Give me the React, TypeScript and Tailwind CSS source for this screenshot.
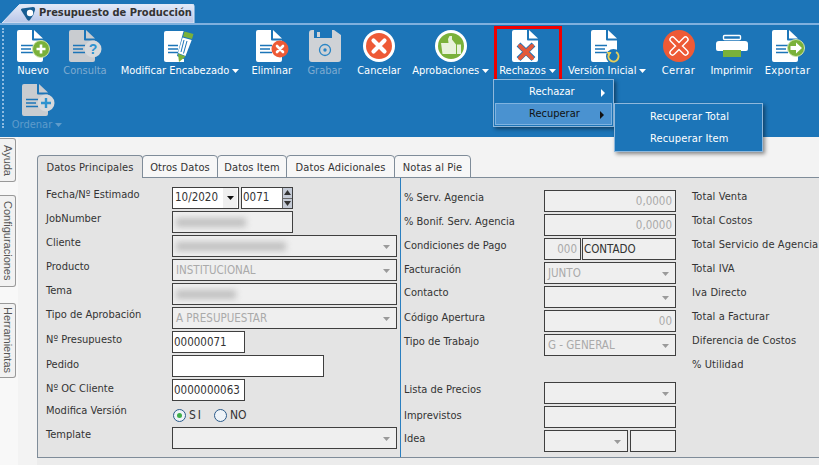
import React from "react";

const BLUE = "#1c75b8";

function Page({ fill = "#ffffff", lines = "#1c75b8" }: { fill?: string; lines?: string }) {
  return (
    <>
      <path d="M2 0H15V9.500a1 1 0 0 0 1 1H26V30a2 2 0 0 1-2 2H2a2 2 0 0 1-2-2V2a2 2 0 0 1 2-2z" fill={fill} />
      <path d="M17 0L26 8.600H17z" fill={fill} />
      <path d="M4 15.500H16M4 19H14M4 22.500H16" stroke={lines} strokeWidth="1.300" />
    </>
  );
}

function Icon({ name }: { name: string }) {
  const svg = (c: React.ReactNode) => (
    <svg viewBox="0 0 32 32" className="w-[32px] h-[32px] block overflow-visible">
      {c}
    </svg>
  );
  switch (name) {
    case "nuevo":
      return svg(
        <>
          <Page />
          <circle cx="24" cy="19" r="8.500" fill="#7ab13a" stroke="#cfe3b0" strokeWidth="1" />
          <path d="M24 14.500V23.500M19.500 19H28.500" stroke="#fff" strokeWidth="2.600" />
        </>
      );
    case "consulta":
      return svg(
        <>
          <Page fill="#c9ccd0" lines="#1c75b8" />
          <circle cx="24" cy="19" r="8.500" fill="#d6d9dc" />
          <text x="24" y="24" textAnchor="middle" fontSize="14" fontWeight="700" fill="#2f93cf" fontFamily="Liberation Sans, sans-serif">?</text>
        </>
      );
    case "modificar":
      return svg(
        <>
          <path d="M2 1H20V32H2a2 2 0 0 1-2-2V3a2 2 0 0 1 2-2z" fill="#fff" />
          <path d="M4 15.500H14M4 19H14M4 22.500H14" stroke="#1c75b8" strokeWidth="1.300" />
          <path d="M20 0H25L30 2L22 30L13 26L19 3z" fill={BLUE} />
          <path d="M20.500 1.500L29.500 4L28 9L19 6.500z" fill="#7ab13a" />
          <path d="M18.600 7.500L27.700 10L21.500 26L14 23z" fill="#fff" />
          <path d="M20 10L17 22M23 11L19.500 23.500" stroke={BLUE} strokeWidth="1" />
          <path d="M14 23.500L21.500 26.500L15 32z" fill="#7ab13a" />
        </>
      );
    case "eliminar":
      return svg(
        <>
          <Page />
          <circle cx="24" cy="19" r="8.500" fill="#ee5a36" />
          <path d="M21 16L27 22M27 16L21 22" stroke="#fff" strokeWidth="2.600" strokeLinecap="round" />
        </>
      );
    case "grabar":
      return svg(
        <>
          <path d="M3 0H5V8H23V0H25L32 5V29a3 3 0 0 1-3 3H3a3 3 0 0 1-3-3V3a3 3 0 0 1 3-3z" fill="#cfd2d6" />
          <rect x="8" y="2" width="3" height="5" fill="#cfd2d6" />
          <circle cx="16" cy="20" r="5.500" fill="none" stroke="#2a85c5" strokeWidth="1.300" />
          <circle cx="16" cy="20" r="1.700" fill="#2a85c5" />
        </>
      );
    case "cancelar":
      return svg(
        <>
          <circle cx="16" cy="16" r="16" fill="#fff" />
          <circle cx="16" cy="16" r="13" fill="#ee5a36" />
          <path d="M10.500 10.500L21.500 21.500M21.500 10.500L10.500 21.500" stroke="#fff" strokeWidth="4.200" strokeLinecap="round" />
        </>
      );
    case "aprobaciones":
      return svg(
        <>
          <circle cx="16" cy="16" r="16" fill="#fff" />
          <circle cx="16" cy="16" r="13" fill="#7ab13a" />
          <g transform="translate(32,0) scale(-1,1)">
            <path d="M6 14.500H10V24H6z" fill="#e8f2da" />
            <path d="M11 14.500L15 9.500V6h2.500L19 9L18.500 13H26L24.500 24H11z" fill="#e8f2da" />
          </g>
        </>
      );
    case "rechazos":
      return svg(
        <>
          <Page lines="#ffffff" />
          <path d="M6.500 14.500L21.500 29M21.500 14.500L6.500 29" stroke={BLUE} strokeWidth="5.400" strokeLinecap="butt" />
          <path d="M8 16L20 28M20 16L8 28" stroke="#e4593a" strokeWidth="4" strokeLinecap="round" />
        </>
      );
    case "version":
      return svg(
        <>
          <Page />
          <circle cx="22.500" cy="26.500" r="7.500" fill={BLUE} />
          <circle cx="22.500" cy="26.500" r="5" fill="none" stroke="#e8d05a" strokeWidth="2" strokeDasharray="25 7" transform="rotate(-60 22.500 26.500)" />
          <path d="M15.500 22H20.500L18 26z" fill="#e8d05a" />
        </>
      );
    case "cerrar":
      return svg(
        <>
          <circle cx="16" cy="16" r="16" fill="#ee5a36" />
          <path d="M9.500 9.500L22.500 22.500M22.500 9.500L9.500 22.500" stroke="#fff" strokeWidth="6.400" strokeLinecap="round" />
          <path d="M9.500 9.500L22.500 22.500M22.500 9.500L9.500 22.500" stroke="#ee5a36" strokeWidth="3.600" strokeLinecap="round" />
        </>
      );
    case "imprimir":
      return svg(
        <>
          <rect x="7.500" y="5.500" width="17" height="4" fill="none" stroke="#fff" strokeWidth="1.400" rx="1" />
          <path d="M3 11H29a3 3 0 0 1 3 3V19a2 2 0 0 1-2 2H2a2 2 0 0 1-2-2V14a3 3 0 0 1 3-3z" fill="#fff" />
          <rect x="7" y="20" width="18" height="7" fill="#7ab13a" />
        </>
      );
    case "exportar":
      return svg(
        <>
          <Page />
          <circle cx="24" cy="18" r="8.500" fill="#7ab13a" stroke="#cfe3b0" strokeWidth="1" />
          <path d="M18.500 16H24V12.500L30 18L24 23.500V20H18.500z" fill="#fff" />
        </>
      );
    default:
      return svg(
        <>
          <Page fill="#c9ccd0" />
          <circle cx="24" cy="19" r="8.500" fill="#d6d9dc" />
          <path d="M24 14V24M19 19H29" stroke="#2f93cf" strokeWidth="2.400" />
        </>
      );
  }
}

function Caret({ color }: { color: string }) {
  return (
    <svg viewBox="0 0 7 4" className="w-[7px] h-[4px] ml-[3px] inline-block">
      <path d="M0 0H7L3.500 4z" fill={color} />
    </svg>
  );
}

const buttons = [
  { w: "w-[44px]", n: "nuevo", t: "Nuevo" },
  { w: "w-[60px]", n: "consulta", t: "Consulta", d: 1 },
  { w: "w-[130px]", n: "modificar", t: "Modificar Encabezado", c: 1 },
  { w: "w-[53.500px]", n: "eliminar", t: "Eliminar" },
  { w: "w-[52px]", n: "grabar", t: "Grabar", d: 1 },
  { w: "w-[57px]", n: "cancelar", t: "Cancelar" },
  { w: "w-[86.500px]", n: "aprobaciones", t: "Aprobaciones", c: 1 },
];
const buttons2 = [
  { w: "w-[92.500px]", n: "version", t: "Versión Inicial", c: 1 },
  { w: "w-[50px]", n: "cerrar", t: "Cerrar", s: 1 },
  { w: "w-[56px]", n: "imprimir", t: "Imprimir" },
  { w: "w-[56px]", n: "exportar", t: "Exportar", s: 1 },
];

function ToolButton({ w, n, t, c, d, s }: { w: string; n: string; t: string; c?: number; d?: number; s?: number }) {
  return (
    <div className={`${w} flex flex-col items-center h-[47px]`}>
      <Icon name={n} />
      <div className={`mt-[2px] h-[14px] leading-[14px] whitespace-nowrap ${s ? "tracking-[0.4px]" : ""} ${d ? "text-[#7fabd0]" : "text-white"}`}>
        {t}
        {c ? <Caret color={d ? "#7fabd0" : "#ffffff"} /> : null}
      </div>
    </div>
  );
}

function Arrow({ color }: { color: string }) {
  return (
    <svg viewBox="0 0 4 8" className="w-[4px] h-[8px]">
      <path d="M0 0L4 4L0 8z" fill={color} />
    </svg>
  );
}

function SelCaret() {
  return (
    <svg viewBox="0 0 7 4" className="w-[7px] h-[4px] shrink-0">
      <path d="M0 0H7L3.500 4z" fill="#9a9a9a" />
    </svg>
  );
}

function Box({
  w,
  children,
  white,
  select,
  right,
}: {
  w: string;
  children?: React.ReactNode;
  white?: boolean;
  select?: boolean;
  right?: boolean;
}) {
  return (
    <div
      className={`${w} h-[22px] border border-[#3f3f3f] shrink-0 flex items-center overflow-hidden leading-none text-[11.500px] pt-[1px] ${
        white ? "bg-white text-[#333]" : "bg-[#efefef] text-[#aaa]"
      } ${right ? "justify-end pr-[3px]" : "pl-[1px]"} ${select ? "justify-between pr-[6px]" : ""}`}
    >
      <div className="min-w-0 flex-1 whitespace-nowrap overflow-visible">{children}</div>
      {select ? <SelCaret /> : null}
    </div>
  );
}

function Blur({ w }: { w: string }) {
  return <div className={`${w} h-[9px] ml-[2px] bg-[#c0c0c0] blur-[3px]`} />;
}

function Row({ label, off, lw, children }: { label: string; off?: string; lw: string; children?: React.ReactNode }) {
  return (
    <div className="flex h-[22px] items-start gap-0">
      <div className={`${lw} shrink-0 h-[14px] leading-[14px] whitespace-nowrap ${off ?? "mt-[1px]"}`}>{label}</div>
      <div className="flex gap-[2px]">{children}</div>
    </div>
  );
}

const LW = "w-[126px]";
const RW = "w-[140px]";

export default function App() {
  return (
    <div className="w-[819px] h-[465px] overflow-hidden flex flex-col bg-[#f3f3f3] text-[11px] text-[#333] font-['DejaVu_Sans',sans-serif] [font-stretch:condensed]">
      {/* Header */}
      <div className="bg-[#1c75b8] h-[137px] shrink-0 flex flex-col">
        <div className="h-[23px] relative shrink-0 pt-[4px] pl-[2px]">
          <svg viewBox="0 0 193 19" className="absolute left-[2px] top-[4px] w-[193px] h-[19px]">
            <defs>
              <linearGradient id="tabg" x1="0" x2="0" y1="0" y2="1">
                <stop offset="0" stopColor="#e3eaf8" />
                <stop offset="1" stopColor="#b8c6e8" />
              </linearGradient>
            </defs>
            <path d="M0 19L17 1Q18 0 20 0H190Q192 0 192 2V19z" fill="url(#tabg)" stroke="#dfe8f6" strokeWidth="1" />
          </svg>
          <div className="relative flex items-center h-[19px] pl-[18px] gap-[3px]">
            <svg viewBox="0 0 16 16" className="w-[16px] h-[16px] shrink-0">
              <path d="M1 4Q0.500 3 2 2.500L13 1Q15.500 1 15 4Q14 9 10 14Q8.500 15.500 7 13.500z" fill="#185d92" />
              <circle cx="10" cy="7" r="3.200" fill="#fff" />
            </svg>
            <span className="font-bold text-[11px] text-[#333] whitespace-nowrap">Presupuesto de Producción</span>
          </div>
        </div>
        <div className="h-[2px] bg-[#7fb0de] shrink-0" />
        <div className="relative flex-1 pt-[5px] pl-[11px]">
          <div className="absolute left-[2px] top-[3px] h-[100px] border-l-2 border-dotted border-[#8fbbe0]" />
          <div className="flex flex-wrap gap-y-[7px]">
            {buttons.map((b) => (
              <ToolButton key={b.n} {...b} />
            ))}
            <div className="relative w-[67px]">
              <ToolButton w="w-[67px]" n="rechazos" t="Rechazos" c={1} />
              <div className="absolute left-0 top-[-4px] w-[68px] h-[60px] border-[3px] border-[#f00000]" />
              <div className="absolute left-[-1px] top-[49px] w-[121px] h-[48px] border border-[#8fb8dc] bg-[#1c75b8] shadow-[2px_2px_4px_rgba(0,0,0,0.45)] z-10 p-[1px] text-white flex flex-col">
                <div className="h-[22px] flex items-center justify-between pl-[34px] pr-[7px] pt-[1px]">
                  <span>Rechazar</span>
                  <Arrow color="#ffffff" />
                </div>
                <div className="h-[22px] flex items-center justify-between pl-[33px] pr-[7px] pt-[1px] bg-[#4a92d0] border border-[#7fb3e0] text-[#111]">
                  <span>Recuperar</span>
                  <Arrow color="#111111" />
                </div>
                <div className="absolute left-[120px] top-[23px] w-[149px] h-[49px] border border-[#8fb8dc] bg-[#1c75b8] shadow-[2px_2px_4px_rgba(0,0,0,0.45)] text-white flex flex-col pt-[2px] pl-[35px] tracking-[0.15px]">
                  <div className="h-[22px] flex items-center">Recuperar Total</div>
                  <div className="h-[22px] flex items-center">Recuperar Item</div>
                </div>
              </div>
            </div>
            {buttons2.map((b) => (
              <ToolButton key={b.n} {...b} />
            ))}
            <div className="w-[52px] flex flex-col items-center h-[47px] text-[#5f9ccb]">
              <div className="ml-[2px]">
                <Icon name="ordenar" />
              </div>
              <div className="mt-[2px] h-[14px] leading-[14px] whitespace-nowrap">
                Ordenar
                <Caret color="#5f9ccb" />
              </div>
            </div>
          </div>
        </div>
      </div>

      {/* Body */}
      <div className="flex-1 flex min-h-0">
        {/* Side tabs */}
        <div className="w-[18px] shrink-0 bg-[#f8f8f8] pt-[1px] flex flex-col font-['Liberation_Sans',sans-serif] [font-stretch:normal] text-[#555] text-[11px]">
          <div className="w-[16px] h-[44px] border border-l-0 border-[#999] rounded-r-[3px] bg-[#f2f2f2] [writing-mode:vertical-rl] flex items-center justify-center">Ayuda</div>
          <div className="w-[16px] h-[92px] mt-[13px] border border-l-0 border-[#999] rounded-r-[3px] bg-[#f2f2f2] [writing-mode:vertical-rl] flex items-center justify-center">Configuraciones</div>
          <div className="w-[16px] h-[75px] mt-[16px] border border-l-0 border-[#999] rounded-r-[3px] bg-[#f2f2f2] [writing-mode:vertical-rl] flex items-center justify-center">Herramientas</div>
        </div>

        {/* Main */}
        <div className="flex-1 min-w-0 pl-[19px] pt-[18px] flex flex-col">
          <div className="flex h-[23px] shrink-0 items-stretch gap-0">
            {[
              ["Datos Principales", "w-[106px]", true],
              ["Otros Datos", "w-[76px]", false],
              ["Datos Item", "w-[70px]", false],
              ["Datos Adicionales", "w-[109px]", false],
              ["Notas al Pie", "w-[77px]", false],
            ].map(([t, w, active]) => (
              <div
                key={t as string}
                className={`${w} border border-[#7f8c99] rounded-t-[4px] -mr-[1px] flex items-center justify-center leading-none tracking-[0.1px] pt-[1px] ${
                  active ? "bg-[#e4e4e4] border-b-0 relative z-10" : "bg-[#f7f7f7] border-b-[#7f8c99]"
                }`}
              >
                {t as string}
              </div>
            ))}
          </div>
          <div className="flex h-[281px] -mt-[1px] border-t border-b border-l border-[#7f8c99] bg-[#e4e4e4] shrink-0">
            {/* Left column */}
            <div className="w-[363px] shrink-0 pl-[8px] pt-[9px] flex flex-col gap-[2px] border-r border-[#2a7fc0]">
              <Row label="Fecha/Nº Estimado" lw={LW}>
                <div className="w-[67px] h-[22px] border border-[#3f3f3f] bg-white flex items-center justify-between text-[11.500px] pl-[2px] leading-none">
                  10/2020
                  <span className="w-[14px] h-[20px] bg-[#efefef] flex items-center justify-center mr-[1px]">
                    <svg viewBox="0 0 7 4" className="w-[7px] h-[4px]">
                      <path d="M0 0H7L3.500 4z" fill="#111" />
                    </svg>
                  </span>
                </div>
                <div className="w-[52px] h-[22px] border border-[#3f3f3f] bg-white flex items-stretch justify-between text-[11.500px] leading-none">
                  <span className="pl-[1px] self-center">0071</span>
                  <span className="w-[10px] border-l border-[#666] flex flex-col bg-[#c5cbd6]">
                    <span className="flex-1 flex items-center justify-center border-b border-[#666]">
                      <svg viewBox="0 0 7 5" className="w-[7px] h-[5px]"><path d="M0 5H7L3.500 0z" fill="#333" /></svg>
                    </span>
                    <span className="flex-1 flex items-center justify-center">
                      <svg viewBox="0 0 7 5" className="w-[7px] h-[5px]"><path d="M0 0H7L3.500 5z" fill="#333" /></svg>
                    </span>
                  </span>
                </div>
              </Row>
              <Row label="JobNumber" lw={LW}>
                <Box w="w-[121px]"><Blur w="w-[70px]" /></Box>
              </Row>
              <Row label="Cliente" lw={LW}>
                <Box w="w-[225px]" select><Blur w="w-[110px]" /></Box>
              </Row>
              <Row label="Producto" lw={LW}>
                <Box w="w-[225px]" select><span className="pl-[2px]">INSTITUCIONAL</span></Box>
              </Row>
              <Row label="Tema" lw={LW}>
                <Box w="w-[225px]"><Blur w="w-[60px]" /></Box>
              </Row>
              <Row label="Tipo de Aprobación" lw={LW}>
                <Box w="w-[225px]" select><span className="pl-[2px]">A PRESUPUESTAR</span></Box>
              </Row>
              <Row label="Nº Presupuesto" off="mt-[2px]" lw={LW}>
                <Box w="w-[73px]" white>00000071</Box>
              </Row>
              <Row label="Pedido" off="mt-[3px]" lw={LW}>
                <Box w="w-[152px]" white />
              </Row>
              <Row label="Nº OC Cliente" off="mt-[3px]" lw={LW}>
                <Box w="w-[73px]" white>0000000063</Box>
              </Row>
              <Row label="Modifica Versión" lw={LW}>
                <div className="flex items-center h-[22px] pl-[1px] pt-[2px] text-[12px] leading-none">
                  <span className="w-[13px] h-[13px] rounded-full border border-[#2a5a8a] bg-[#eef3f8] flex items-center justify-center">
                    <span className="w-[5px] h-[5px] rounded-full bg-[#3fae49]" />
                  </span>
                  <span className="ml-[3px] tracking-[2px]">SI</span>
                  <span className="ml-[11px] w-[13px] h-[13px] rounded-full border border-[#2a5a8a] bg-[#eef3f8]" />
                  <span className="ml-[3px]">NO</span>
                </div>
              </Row>
              <Row label="Template" lw={LW}>
                <Box w="w-[225px]" select />
              </Row>
            </div>

            {/* Right column */}
            <div className="w-[291px] shrink-0 pl-[3px] pt-[12px] flex flex-col gap-[2px]">
              <Row label="% Serv. Agencia" lw={RW}>
                <Box w="w-[132px]" right><span className="block text-right">0,0000</span></Box>
              </Row>
              <Row label="% Bonif. Serv. Agencia" lw={RW}>
                <Box w="w-[132px]" right><span className="block text-right">0,0000</span></Box>
              </Row>
              <Row label="Condiciones de Pago" lw={RW}>
                <div className="flex gap-[1px]">
                  <Box w="w-[37px]" right><span className="block text-right">000</span></Box>
                  <Box w="w-[94px]"><span className="text-[#333]">CONTADO</span></Box>
                </div>
              </Row>
              <Row label="Facturación" lw={RW}>
                <Box w="w-[132px]" select><span className="pl-[2px]">JUNTO</span></Box>
              </Row>
              <Row label="Contacto" off="mt-0" lw={RW}>
                <Box w="w-[132px]" select />
              </Row>
              <Row label="Código Apertura" lw={RW}>
                <Box w="w-[132px]" right><span className="block text-right">00</span></Box>
              </Row>
              <Row label="Tipo de Trabajo" lw={RW}>
                <Box w="w-[132px]" select><span className="pl-[2px]">G - GENERAL</span></Box>
              </Row>
              <div className="h-[22px]" />
              <Row label="Lista de Precios" lw={RW}>
                <Box w="w-[132px]" select />
              </Row>
              <Row label="Imprevistos" off="mt-[3px]" lw={RW}>
                <Box w="w-[132px]" />
              </Row>
              <Row label="Idea" off="mt-[2px]" lw={RW}>
                <Box w="w-[84px]" select />
                <Box w="w-[46px]" />
              </Row>
            </div>

            {/* Totals */}
            <div className="flex-1 pt-[12px] flex flex-col whitespace-nowrap tracking-[0.1px]">
              {["Total Venta", "Total Costos", "Total Servicio de Agencia", "Total IVA", "Iva Directo", "Total a Facturar", "Diferencia de Costos", "% Utilidad"].map((t) => (
                <div key={t} className="h-[24px] leading-[14px]">{t}</div>
              ))}
            </div>
          </div>
          <div className="flex-1 bg-[#ececec]" />
        </div>
      </div>
    </div>
  );
}
